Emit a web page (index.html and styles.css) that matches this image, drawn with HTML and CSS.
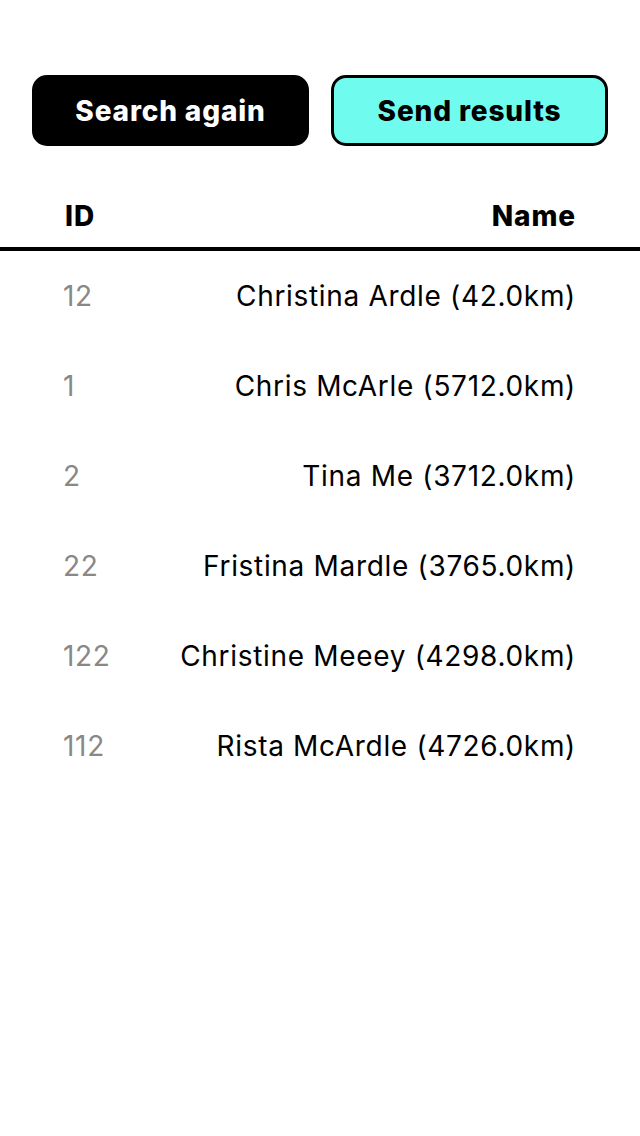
FILE: index.html
```html
<!DOCTYPE html>
<html>
<head>
<meta charset="utf-8">
<link rel="stylesheet" href="styles.css">
</head>
<body>
<div class="actions">
  <button class="btn btn-dark">Search again</button>
  <button class="btn btn-cyan">Send results</button>
</div>
<div class="table">
  <div class="thead">
    <span>ID</span>
    <span>Name</span>
  </div>
  <div class="row"><span class="id">12</span><span class="name">Christina Ardle (42.0km)</span></div>
  <div class="row"><span class="id">1</span><span class="name">Chris McArle (5712.0km)</span></div>
  <div class="row"><span class="id">2</span><span class="name">Tina Me (3712.0km)</span></div>
  <div class="row"><span class="id">22</span><span class="name">Fristina Mardle (3765.0km)</span></div>
  <div class="row"><span class="id">122</span><span class="name">Christine Meeey (4298.0km)</span></div>
  <div class="row"><span class="id">112</span><span class="name">Rista McArdle (4726.0km)</span></div>
</div>
</body>
</html>
```

FILE: styles.css
```css
html, body {
  margin: 0;
  padding: 0;
  background: #fff;
  font-family: Inter, Roboto, "Liberation Sans", sans-serif;
  color: #000;
}
.actions {
  display: flex;
  gap: 22px;
  padding: 75px 32px 0 32px;
}
.btn {
  width: 277px;
  height: 71px;
  border-radius: 15px;
  font-family: inherit;
  font-size: 28px;
  font-weight: 800;
  letter-spacing: 0.85px;
  cursor: pointer;
  padding: 0;
}
.btn-dark {
  background: #000;
  color: #fff;
  border: 3px solid #000;
}
.btn-cyan {
  background: #6ffcef;
  color: #000;
  border: 3px solid #000;
}
.table {
  margin-top: 44px;
}
.thead {
  display: flex;
  justify-content: space-between;
  align-items: center;
  height: 51px;
  padding: 0 64px 6px 65px;
  font-size: 28px;
  font-weight: 800;
  letter-spacing: 0.9px;
  border-bottom: 4px solid #000;
}
.row {
  display: flex;
  justify-content: space-between;
  align-items: center;
  height: 90px;
  padding: 0 64px 0 63px;
  font-size: 28px;
  letter-spacing: 0.68px;
}
.id {
  color: #888;
}
```
